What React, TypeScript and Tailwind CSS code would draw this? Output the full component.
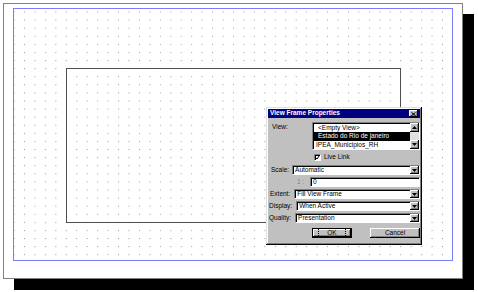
const raised =
  "shadow-[inset_-1px_-1px_0_#000,inset_1px_1px_0_#fff,inset_-2px_-2px_0_#808080]";
const sunken =
  "border border-t-[#808080] border-l-[#808080] border-b-white border-r-white shadow-[inset_1px_1px_0_#000]";

function ArrowDown() {
  return (
    <svg width="5" height="3" viewBox="0 0 5 3">
      <path d="M0 0h5L2.5 3z" fill="#000" />
    </svg>
  );
}

function ArrowUp() {
  return (
    <svg width="5" height="3" viewBox="0 0 5 3">
      <path d="M0 3h5L2.5 0z" fill="#000" />
    </svg>
  );
}

function Select({ value }: { value: string }) {
  return (
    <div className={`flex-1 h-[10px] bg-white flex ${sunken}`}>
      <span className="flex-1 pl-[2px] pt-[1px] flex items-center">{value}</span>
      <div className={`w-[9px] h-full bg-[#c0c0c0] flex items-center justify-center ${raised}`}>
        <ArrowDown />
      </div>
    </div>
  );
}

function Row({ label, pad, value }: { label: string; pad: string; value: string }) {
  return (
    <div className="flex items-center gap-[4px] h-[10px] mt-[2px]">
      <span className={pad}>{label}</span>
      <Select value={value} />
    </div>
  );
}

export default function App() {
  return (
    <div className="relative w-[478px] h-[292px] bg-white overflow-hidden pt-[3px] pl-[3px] font-['Liberation_Sans',Arial,sans-serif]">
      {/* page */}
      <div className="w-[460px] h-[276px] border border-[#808080] bg-white shadow-[11px_11px_0_0_#000] pt-[4px] pl-[9px]">
        <div className="relative w-[440px] h-[253px] border border-[#7c7cff]">
          <svg className="absolute inset-0" width="438" height="251">
            <defs>
              <pattern id="dots" x="10" y="2.5" width="10.45" height="8.09" patternUnits="userSpaceOnUse">
                <rect x="0" y="0" width="1" height="1" fill="#9a9a9a" />
              </pattern>
            </defs>
            <rect width="438" height="251" fill="url(#dots)" />
          </svg>
          <div className="relative ml-[52px] mt-[59px] w-[335px] h-[155px] border border-[#505050]" />
        </div>
      </div>

      {/* dialog */}
      <div className="absolute left-[266px] top-[107px] w-[156px] h-[138px] bg-[#c0c0c0] p-[2px] shadow-[inset_-1px_-1px_0_#000,inset_1px_1px_0_#dfdfdf,inset_-2px_-2px_0_#808080,inset_2px_2px_0_#fff] flex flex-col text-[6.5px] leading-none text-black">
        <div className="h-[9px] bg-[#000080] flex items-center pl-[2px] pr-[2px] text-white font-bold">
          <span className="flex-1">View Frame Properties</span>
          <div className={`w-[9px] h-[7px] bg-[#c0c0c0] flex items-center justify-center ${raised}`}>
            <svg width="5" height="4" viewBox="0 0 5 4">
              <path d="M0.5 0.5l4 3M4.5 0.5l-4 3" stroke="#000" strokeWidth="1" />
            </svg>
          </div>
        </div>

        {/* view list */}
        <div className="flex mt-[4px]">
          <span className="w-[44px] pl-[4px] pt-[2px]">View:</span>
          <div className={`w-[108px] h-[28px] bg-white flex ${sunken}`}>
            <div className="flex-1 flex flex-col pt-[1px] pl-[1px]">
              <div className="h-[8.5px] flex items-center pl-[4px]">&lt;Empty View&gt;</div>
              <div className="h-[8.5px] flex items-center pl-[4px] bg-black text-white">Estado do Rio de janeiro</div>
              <div className="h-[8.5px] flex items-center pl-[2px]">IPEA_Municipios_RH</div>
            </div>
            <div className="w-[9px] flex flex-col bg-[#e0e0e0]">
              <div className={`h-[9px] bg-[#c0c0c0] flex items-center justify-center ${raised}`}>
                <ArrowUp />
              </div>
              <div className="flex-1" />
              <div className={`h-[9px] bg-[#c0c0c0] flex items-center justify-center ${raised}`}>
                <ArrowDown />
              </div>
            </div>
          </div>
        </div>

        {/* live link */}
        <div className="flex items-center h-[8px] mt-[3px] pl-[46px]">
          <div className={`w-[7px] h-[7px] bg-white flex items-center justify-center ${sunken}`}>
            <svg width="5" height="5" viewBox="0 0 5 5">
              <path d="M0.5 2.5l1.5 1.5 2.5-3.5" stroke="#000" strokeWidth="1" fill="none" />
            </svg>
          </div>
          <span className="ml-[3px]">Live Link</span>
        </div>

        <div className="flex items-center gap-[3px] h-[10px] mt-[4px]">
          <span className="pl-[3px]">Scale:</span>
          <Select value="Automatic" />
        </div>

        <div className="flex items-center h-[10px] mt-[2px]">
          <span className="w-[42px] pl-[29px] text-[#808080]">1 :</span>
          <div className={`flex-1 h-[10px] bg-white flex items-center pl-[2px] pt-[1px] ${sunken}`}>0</div>
        </div>

        <Row label="Extent:" pad="pl-[2px]" value="Fill View Frame" />
        <Row label="Display:" pad="pl-[1px]" value="When Active" />
        <Row label="Quality:" pad="pl-[1px]" value="Presentation" />

        {/* buttons */}
        <div className="flex h-[10px] mt-[5px]">
          <div className="ml-[44px] w-[40px] h-full border border-black">
            <div className={`h-full bg-[#c0c0c0] flex items-center justify-center ${raised}`}>
              <span className="border border-dotted border-black px-[8px] py-[0.5px]">OK</span>
            </div>
          </div>
          <div className={`ml-[18px] w-[50px] h-full bg-[#c0c0c0] flex items-center justify-center ${raised}`}>
            Cancel
          </div>
        </div>
      </div>
    </div>
  );
}
